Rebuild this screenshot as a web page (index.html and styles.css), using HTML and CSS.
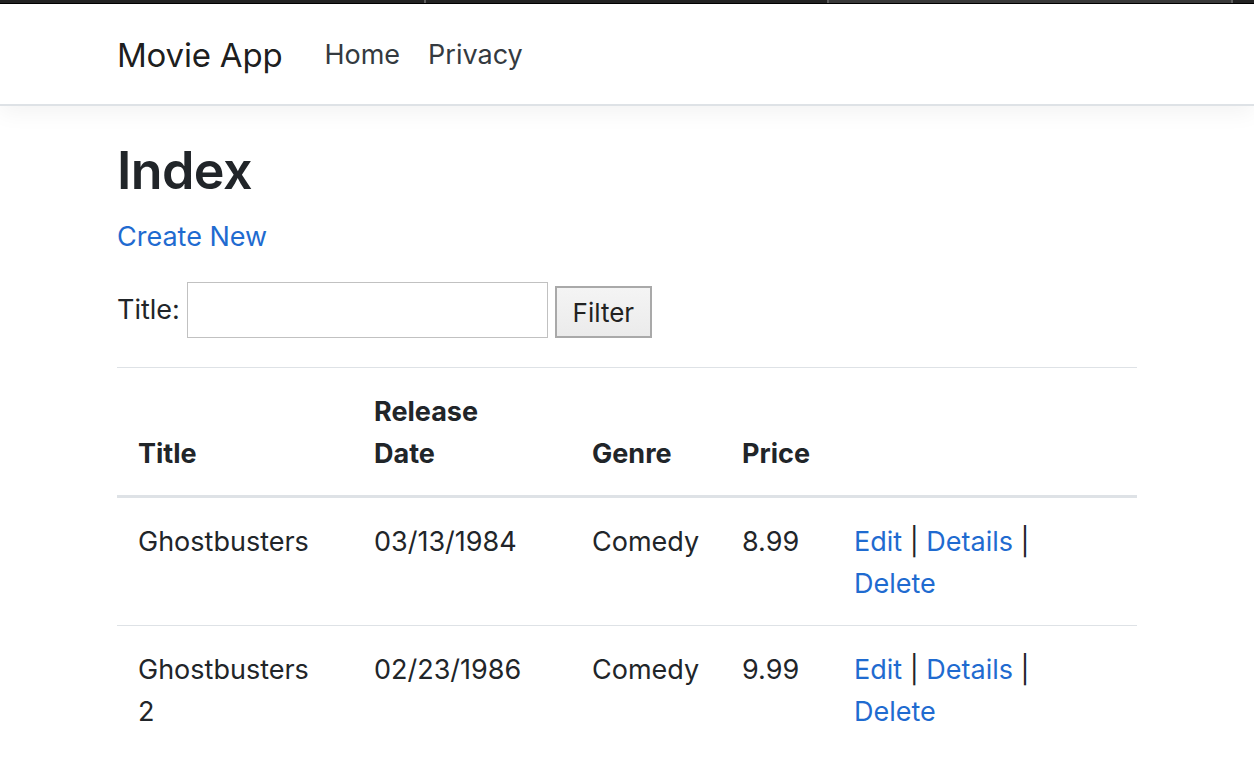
FILE: index.html
```html
<!DOCTYPE html>
<html lang="en">
<head>
<meta charset="utf-8">
<title>Index - Movie App</title>
<link rel="stylesheet" href="styles.css">
</head>
<body>
<div class="chrome">
  <div class="tab t1"></div>
  <div class="sep"></div>
  <div class="tab t2"></div>
  <div class="sep"></div>
  <div class="tab t3"></div>
  <div class="sep"></div>
  <div class="tab t4"></div>
</div>
<header class="navbar">
  <div class="nav-inner">
    <a class="brand" href="#">Movie App</a>
    <nav class="nav">
      <a class="nav-link" href="#">Home</a>
      <a class="nav-link" href="#">Privacy</a>
    </nav>
  </div>
</header>
<main class="container">
  <h1 class="title">Index</h1>
  <p class="create"><a href="#">Create New</a></p>
  <form class="filter">
    <label class="filter-label">Title: <input type="text" class="filter-input"></label>
    <button type="button" class="filter-btn">Filter</button>
  </form>
  <table class="table">
    <thead>
      <tr>
        <th class="c-title">Title</th>
        <th class="c-date">Release Date</th>
        <th class="c-genre">Genre</th>
        <th class="c-price">Price</th>
        <th class="c-act"></th>
      </tr>
    </thead>
    <tbody>
      <tr>
        <td>Ghostbusters</td>
        <td>03/13/1984</td>
        <td>Comedy</td>
        <td>8.99</td>
        <td><a href="#">Edit</a> | <a href="#">Details</a> | <a href="#">Delete</a></td>
      </tr>
      <tr>
        <td>Ghostbusters 2</td>
        <td>02/23/1986</td>
        <td>Comedy</td>
        <td>9.99</td>
        <td><a href="#">Edit</a> | <a href="#">Details</a> | <a href="#">Delete</a></td>
      </tr>
    </tbody>
  </table>
</main>
</body>
</html>
```

FILE: styles.css
```css
* { box-sizing: border-box; }
html, body { margin: 0; padding: 0; }
body {
  font-family: Inter, "Noto Sans", "Liberation Sans", sans-serif;
  font-size: 28px;
  line-height: 42px;
  color: #212529;
  background: #fff;
  overflow: hidden;
}
a { color: #1f6bd0; text-decoration: none; }

.chrome {
  display: flex;
  height: 4px;
  background: #1f1f1f;
  border-bottom: 1px solid #000;
}
.tab { height: 3px; background: #232323; }
.t1 { width: 424px; }
.t2 { width: 401px; }
.t3 { width: 402px; background: #3a3a3a; }
.t4 { flex: 1; }
.sep { width: 2px; height: 3px; background: #5e5e5e; }

.navbar {
  background: #fff;
  border-bottom: 2px solid #dee2e6;
  box-shadow: 0 7px 21px rgba(0, 0, 0, 0.05);
  position: relative;
}
.nav-inner {
  display: flex;
  align-items: center;
  height: 100px;
  padding-left: 117px;
  padding-top: 2px;
}
.brand {
  color: rgba(0, 0, 0, 0.9);
  font-size: 33px;
  margin-right: 28px;
  letter-spacing: -0.2px;
}
.nav { display: flex; }
.nav-link {
  color: #343a40;
  padding: 0 14px;
  font-size: 27px;
}

.container {
  padding-left: 117px;
  width: 1137px;
}
.title {
  font-size: 52px;
  font-weight: 600;
  line-height: 70px;
  margin: 30px 0 0;
  letter-spacing: -0.6px;
}
.create {
  margin: 10px 0 0;
  font-size: 27px;
}
.filter {
  display: flex;
  align-items: flex-end;
  margin: 23px 0 29px;
  height: 57px;
}
.filter-label {
  display: flex;
  align-items: center;
  font-size: 27px;
  gap: 7px;
}
.filter-input {
  width: 361px;
  height: 56px;
  border: 1px solid #c1c1c1;
  font-size: 27px;
  padding: 0 8px;
  background: #fff;
}
.filter-btn {
  margin-left: 7px;
  width: 97px;
  height: 52px;
  border: 2px solid #a9a9a9;
  background: linear-gradient(#f4f4f4, #ebebeb);
  font-family: inherit;
  font-size: 26px;
  color: #222;
  padding: 0;
}

.table {
  width: 1020px;
  border-collapse: collapse;
}
.table th, .table td {
  padding: 23px 21px 20px;
  text-align: left;
  vertical-align: top;
  border-top: 1.5px solid #dee2e6;
}
.table th {
  vertical-align: bottom;
  font-weight: 700;
  font-size: 27px;
  border-bottom: 3.5px solid #dee2e6;
}
.table td { font-size: 27px; }
.c-title { width: 236px; }
.c-date { width: 218px; }
.table th.c-date { padding-right: 60px; }
.c-genre { width: 150px; }
.c-price { width: 112px; }
```
